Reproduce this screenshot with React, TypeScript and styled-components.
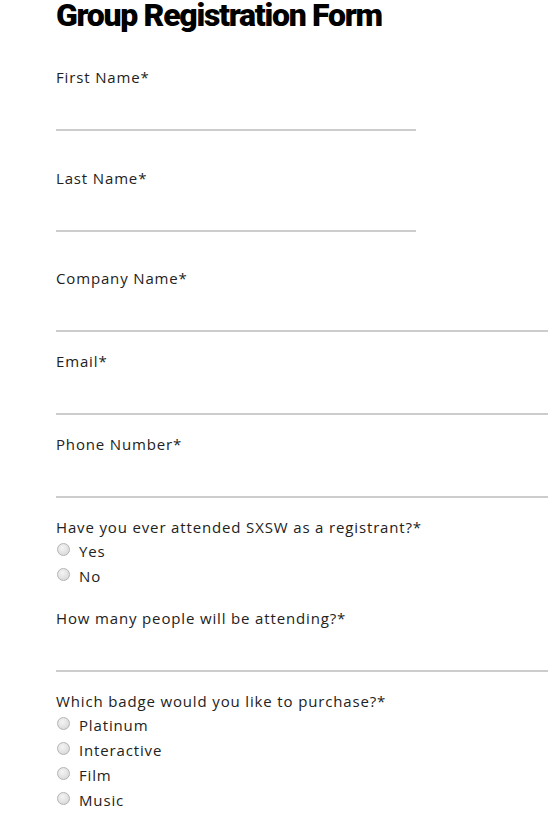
import React from "react";
import styled, { createGlobalStyle } from "styled-components";

const Global = createGlobalStyle`
  html, body { margin: 0; padding: 0; background: #fff; }
  body { font-family: "Open Sans", "Liberation Sans", sans-serif; color: #222; }
  * { box-sizing: border-box; }
`;

const Page = styled.div`
  padding: 0 0 0 56px;
  width: 548px;
`;

const Title = styled.h1`
  margin: 0 0 37px 0;
  padding-top: 0;
  font-family: "Roboto", "Liberation Sans", sans-serif;
  font-weight: 900;
  font-size: 32px;
  line-height: 30px;
  letter-spacing: -1.3px;
  color: #000;
`;

const Form = styled.form`
  display: flex;
  flex-direction: column;
`;

const Field = styled.div<{ $half?: boolean }>`
  display: flex;
  flex-direction: column;
  width: ${(p) => (p.$half ? "360px" : "492px")};
  margin-bottom: ${(p) => (p.$half ? "36.5px" : "19px")};
`;

const Group = styled.div`
  display: flex;
  flex-direction: column;
  margin-bottom: 20px;
`;

const Options = styled.div`
  display: flex;
  flex-direction: column;
  padding-top: 1px;
`;

const Label = styled.label`
  display: block;
  font-size: 15px;
  line-height: 20px;
  height: 20px;
  letter-spacing: 0.85px;
  color: #222;
`;

const TextInput = styled.input`
  display: block;
  width: 100%;
  height: 44px;
  border: none;
  border-bottom: 2px solid #cccccc;
  outline: none;
  background: transparent;
  font: inherit;
  padding: 0;
`;

const Option = styled.label`
  display: flex;
  align-items: center;
  height: 25px;
  font-size: 15px;
  letter-spacing: 0.85px;
  color: #222;
`;

const Radio = styled.input.attrs({ type: "radio" })`
  appearance: none;
  -webkit-appearance: none;
  width: 13px;
  height: 13px;
  margin: 0 9px 3px 1px;
  border-radius: 50%;
  border: 1px solid #b4b4b4;
  background: radial-gradient(circle at 40% 35%, #f4f4f4 0%, #e2e2e2 55%, #d0d0d0 100%);
  flex: none;
`;

const textFields: { label: string; half?: boolean }[] = [
  { label: "First Name*", half: true },
  { label: "Last Name*", half: true },
  { label: "Company Name*" },
  { label: "Email*" },
  { label: "Phone Number*" },
];

function RadioGroup({ question, name, options }: { question: string; name: string; options: string[] }) {
  return (
    <Group>
      <Label>{question}</Label>
      <Options>
        {options.map((o) => (
          <Option key={o}>
            <Radio name={name} />
            {o}
          </Option>
        ))}
      </Options>
    </Group>
  );
}

export default function App() {
  return (
    <Page>
      <Global />
      <Title>Group Registration Form</Title>
      <Form>
        {textFields.map((f) => (
          <Field key={f.label} $half={f.half}>
            <Label>{f.label}</Label>
            <TextInput type="text" />
          </Field>
        ))}
        <RadioGroup
          question="Have you ever attended SXSW as a registrant?*"
          name="attended"
          options={["Yes", "No"]}
        />
        <Field>
          <Label>How many people will be attending?*</Label>
          <TextInput type="text" />
        </Field>
        <RadioGroup
          question="Which badge would you like to purchase?*"
          name="badge"
          options={["Platinum", "Interactive", "Film", "Music"]}
        />
      </Form>
    </Page>
  );
}
